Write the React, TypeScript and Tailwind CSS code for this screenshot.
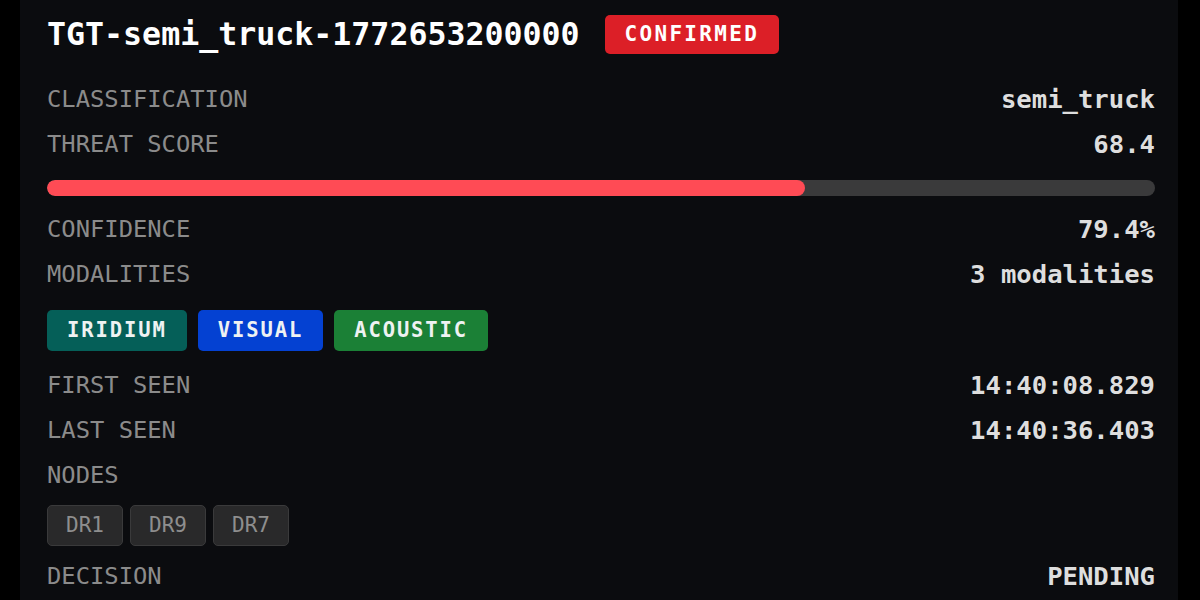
const mono = { fontFamily: '"DejaVu Sans Mono", "Liberation Mono", monospace' };

const modalities = [
  { name: "IRIDIUM", cls: "bg-[#055f58]" },
  { name: "VISUAL", cls: "bg-[#0441d2]" },
  { name: "ACOUSTIC", cls: "bg-[#1b8036]" },
];

const nodes = ["DR1", "DR9", "DR7"];

function Row({ label, value, className = "" }: { label: string; value?: string; className?: string }) {
  return (
    <div className={`flex h-[36px] items-center justify-between pt-px ${className}`}>
      <span className="text-[23.8px] text-[#8b8b8b]">{label}</span>
      {value && <span className="text-[25.6px] font-semibold text-[#dedede]">{value}</span>}
    </div>
  );
}

export default function App() {
  const score = 68.4;

  return (
    <div className="h-[600px] w-[1200px] overflow-hidden bg-black" style={mono}>
      <div className="ml-[20px] h-full w-[1158px] bg-[#0b0c0f] pl-[27px] pr-[23px] pt-[15px]">
        {/* Header */}
        <div className="flex h-[39px] items-center gap-[25px]">
          <h1 className="text-[31.6px] font-bold leading-none text-white">TGT-semi_truck-1772653200000</h1>
          <span className="flex h-[39px] items-center rounded-[5px] bg-[#dc1f27] px-[20px] text-[21px] font-bold tracking-[2.3px] text-white">
            CONFIRMED
          </span>
        </div>

        <Row label="CLASSIFICATION" value="semi_truck" className="mt-[27px]" />
        <Row label="THREAT SCORE" value="68.4" className="mt-[9px]" />

        <div className="mt-[18px] h-[16px] w-full overflow-hidden rounded-full bg-[#3a3a3b]">
          <div className="h-full rounded-full bg-[#ff4b55]" style={{ width: `${score}%` }} />
        </div>

        <Row label="CONFIDENCE" value="79.4%" className="mt-[15px]" />
        <Row label="MODALITIES" value="3 modalities" className="mt-[9px]" />

        <div className="mt-[18px] flex gap-[11px]">
          {modalities.map((m) => (
            <span
              key={m.name}
              className={`flex h-[41px] items-center rounded-[5px] px-[20px] text-[20.5px] font-bold tracking-[1.9px] text-[#eef2f2] ${m.cls}`}
            >
              {m.name}
            </span>
          ))}
        </div>

        <Row label="FIRST SEEN" value="14:40:08.829" className="mt-[16px]" />
        <Row label="LAST SEEN" value="14:40:36.403" className="mt-[9px]" />
        <Row label="NODES" className="mt-[9px]" />

        <div className="mt-[12px] flex gap-[7px]">
          {nodes.map((n) => (
            <span
              key={n}
              className="flex h-[41px] w-[76px] items-center justify-center rounded-[5px] border border-[#3a3a3b] bg-[#29292a] text-[21px] text-[#8e8e8e]"
            >
              {n}
            </span>
          ))}
        </div>

        <Row label="DECISION" value="PENDING" className="mt-[12px]" />
      </div>
    </div>
  );
}
